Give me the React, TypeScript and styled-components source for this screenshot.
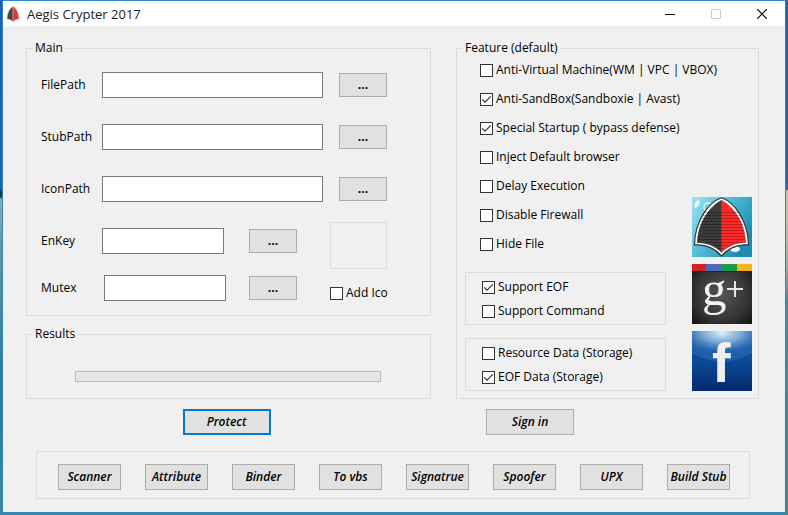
import React from "react";
import styled, { createGlobalStyle } from "styled-components";

const Global = createGlobalStyle`
  * { box-sizing: border-box; }
  body { margin: 0; font-family: "Open Sans", "Trebuchet MS", sans-serif; font-size: 12px; line-height: 16px; color: #000; }
  button, input { font: inherit; color: inherit; margin: 0; }
`;

const Desktop = styled.div`
  min-height: 100vh;
  display: flex;
  padding: 0 2px 2px;
  background:
    linear-gradient(#1c5fb0 0, #2464b4 188px, #0d3a5c 191px, #14405c 197px, #8fa9b4 199px, #6f9490 245px, #2c7a96 380px, #43878f 100%) left / 50% 100% no-repeat,
    linear-gradient(#1c5fb0 0, #2a5ea8 189px, #c4c4b4 191px, #b4b8b0 240px, #8a9a98 280px, #4a90a4 300px, #3c8a98 400px, #43878f 100%) right / 50% 100% no-repeat;
`;

const Window = styled.main`
  flex: 1;
  display: flex;
  flex-direction: column;
  border: 1px solid #2d86c4;
  background: #f0f0f0;
`;

const TitleBar = styled.header`
  display: flex;
  align-items: center;
  height: 25px;
  padding-left: 3px;
  background: #fff;
`;

const Title = styled.h1`
  flex: 1;
  margin: 0 0 0 7px;
  font-size: 13px;
  font-weight: 400;
  line-height: 16px;
  color: #222;
`;

const Caption = styled.button`
  width: 46px;
  height: 25px;
  padding: 0;
  border: 0;
  background: transparent;
  display: grid;
  place-items: center;
  &:disabled { color: #ccc; }
`;

const Body = styled.div`
  flex: 1;
  padding: 15px 26px 12px 23px;
`;

const Columns = styled.div`
  display: grid;
  grid-template-columns: 405fr 303fr;
  column-gap: 25px;
`;

const Column = styled.div`
  display: flex;
  flex-direction: column;
  gap: 11px;
`;

const Group = styled.fieldset<{ $fill?: boolean }>`
  min-width: 0;
  margin: 0;
  padding: 0;
  border: 1px solid #dcdcdc;
  flex: ${(p) => (p.$fill ? "1" : "none")};
`;

const Legend = styled.legend`
  height: 14px;
  line-height: 14px;
  margin-left: 6px;
  padding: 0 2px;
`;

const Fields = styled.div`
  display: grid;
  grid-template-columns: 61px 1fr 64px;
  row-gap: 26px;
  padding: 17px 43px 0 14px;
  align-items: center;
`;

const FieldLabel = styled.label`
  align-self: center;
`;

const TextBox = styled.input`
  width: 100%;
  height: 26px;
  padding: 2px 4px;
  border: 1px solid #7a7a7a;
  background: #fff;
`;

const PathRow = styled.div`
  display: contents;
`;

const Lower = styled.div`
  display: flex;
  justify-content: space-between;
  padding: 20px 43px 14px 14px;
`;

const KeyRows = styled.div`
  display: grid;
  row-gap: 21px;
  padding-top: 6px;
  align-content: start;
`;

const KeyRow = styled.div<{ $inset?: boolean }>`
  display: grid;
  grid-template-columns: ${(p) => (p.$inset ? 63 : 61)}px 122px 1fr;
  width: 256px;
  align-items: center;
`;

const IconArea = styled.div`
  display: flex;
  flex-direction: column;
  gap: 16px;
  width: 57px;
`;

const Preview = styled.div`
  height: 47px;
  border: 1px solid #dcdcdc;
`;

const Push = styled.button<{ $w?: number; $primary?: boolean }>`
  width: ${(p) => p.$w ?? 48}px;
  height: 26px;
  padding: 0;
  border: ${(p) => (p.$primary ? "2px solid #0078d7" : "1px solid #adadad")};
  background: #e1e1e1;
  font-weight: 600;
  font-style: italic;
  white-space: nowrap;
`;

const Browse = styled(Push)`
  height: 24px;
  justify-self: end;
  font-weight: 700;
  font-style: normal;
`;

const Meter = styled.progress`
  appearance: none;
  display: block;
  width: calc(100% - 97px);
  height: 11px;
  margin: 30px 49px 16px 48px;
  border: 1px solid #bcbcbc;
  background: #e6e6e6;
  &::-webkit-progress-bar { background: #e6e6e6; }
  &::-webkit-progress-value { background: #06b025; }
`;

const CheckLabel = styled.label`
  display: flex;
  align-items: center;
  gap: 3px;
  height: 16px;
  white-space: nowrap;
`;

const Box = styled.input`
  appearance: none;
  flex: none;
  width: 13px;
  height: 13px;
  border: 1px solid #333;
  background: #fff;
  &:checked {
    background: #fff url("data:image/svg+xml,%3Csvg xmlns='http://www.w3.org/2000/svg' viewBox='0 0 11 11'%3E%3Cpath d='M1.2 5.3l2.8 2.9 5.8-5.8' fill='none' stroke='%23333' stroke-width='1.2'/%3E%3C/svg%3E") center / 11px 11px no-repeat;
  }
`;

const FeatureBody = styled.div`
  display: flex;
  justify-content: space-between;
  padding: 7px 6px 6px 8px;
`;

const FeatureLeft = styled.div`
  flex: 1;
  min-width: 0;
  max-width: 201px;
`;

const CheckList = styled.div`
  display: grid;
  row-gap: 13px;
  padding: 0 0 20px 15px;
`;

const Storage = styled.div`
  display: grid;
  row-gap: 8px;
  padding: 6px 0 5px 16px;
  border: 1px solid #dcdcdc;
  & + & { margin-top: 13px; }
`;

const Links = styled.nav`
  display: flex;
  flex-direction: column;
  justify-content: flex-end;
  gap: 7px;
`;

const Tile = styled.a`
  display: block;
  height: 60px;
  svg { display: block; overflow: visible; }
`;

const Actions = styled.div`
  display: grid;
  grid-template-columns: 405fr 303fr;
  column-gap: 25px;
  margin-top: 10px;
`;

const Action = styled.div<{ $left?: boolean }>`
  display: flex;
  justify-content: ${(p) => (p.$left ? "flex-start" : "center")};
  padding: ${(p) => (p.$left ? "0 0 0 30px" : "0 4px 0 0")};
`;

const Tools = styled.section`
  display: flex;
  justify-content: space-between;
  margin: 16px 9px 0 10px;
  padding: 12px 19px 8px 21px;
  border: 1px solid #dcdcdc;
`;

function AegisLogo() {
  return (
    <svg width="60" height="60" viewBox="0 0 60 60">
      <defs>
        <linearGradient id="sea" x1="0" y1="0" x2="1" y2="0.6">
          <stop offset="0" stopColor="#a4e2f0" />
          <stop offset="0.4" stopColor="#5ac4de" />
          <stop offset="1" stopColor="#1a8db0" />
        </linearGradient>
        <pattern id="ribs" width="4" height="3" patternUnits="userSpaceOnUse">
          <path d="M0 .5h4" stroke="#000" strokeOpacity="0.28" />
        </pattern>
      </defs>
      <rect width="60" height="60" fill="url(#sea)" />
      <ellipse cx="5" cy="7" rx="2" ry="4" fill="#e4f8fc" transform="rotate(25 5 7)" />
      <circle cx="16" cy="10" r="4" fill="none" stroke="#dff5fa" strokeWidth="1.5" />
      <ellipse cx="43" cy="52" rx="5" ry="3" fill="#f4fcff" />
      <path d="M29.5 .7C17 5 3 23 2.500 48c11-1 20 3 27 11 7-8 16-12 27-11C56 23 42 5 29.500 .7z" fill="#fff" stroke="#333" strokeWidth="1.2" />
      <path d="M29.5 3.500C18 9 6 26 5.500 45.500c9 0 17 3 24 9.500z" fill="#3c3c3c" stroke="#333" strokeWidth="0.8" />
      <path d="M29.5 3.500C41 9 53 26 53.500 45.500c-9 0-17 3-24 9.500z" fill="#ff2a2a" stroke="#b33" strokeWidth="0.8" />
      <path d="M13 14H46c4 8 7 18 7 31-9 0-17 3-23.500 9C23 48 15 45 6 45c0-13 3-23 7-31z" fill="url(#ribs)" />
    </svg>
  );
}

function GooglePlusLogo() {
  return (
    <svg width="60" height="60" viewBox="0 0 60 60">
      <defs>
        <radialGradient id="coal" cx="0.5" cy="0.5" r="0.7">
          <stop offset="0" stopColor="#555" />
          <stop offset="0.6" stopColor="#383635" />
          <stop offset="1" stopColor="#151312" />
        </radialGradient>
      </defs>
      <rect width="60" height="60" fill="url(#coal)" />
      <path d="M0 0h14v7H0z" fill="#d92028" />
      <path d="M14 0h16v7H14z" fill="#4a6cb8" />
      <path d="M30 0h15v7H30z" fill="#169c48" />
      <path d="M45 0h15v7H45z" fill="#f4b51c" />
      <path d="M0 7.500h60" stroke="#222" />
      <text x="10" y="41" fontFamily="Liberation Serif, serif" fontSize="49" fill="#f2f2f2">g</text>
      <path d="M35 25h16M43 17v16" stroke="#e6e6e6" strokeWidth="2" />
    </svg>
  );
}

function FacebookLogo() {
  return (
    <svg width="60" height="60" viewBox="0 0 60 60">
      <defs>
        <linearGradient id="navy" x1="0" y1="0" x2="0" y2="1">
          <stop offset="0" stopColor="#1c5cac" />
          <stop offset="0.5" stopColor="#0c4a98" />
          <stop offset="1" stopColor="#062a6c" />
        </linearGradient>
        <radialGradient id="shine" cx="0.5" cy="0.05" r="0.65">
          <stop offset="0" stopColor="#e4f1f8" />
          <stop offset="0.5" stopColor="#8db8dc" stopOpacity="0.85" />
          <stop offset="1" stopColor="#3478bc" stopOpacity="0.4" />
        </radialGradient>
      </defs>
      <rect width="60" height="60" fill="url(#navy)" />
      <path d="M0 0h60v22Q30 39 0 22z" fill="url(#shine)" />
      <text x="20" y="51" fontFamily="Liberation Sans, sans-serif" fontWeight="700" fontSize="56" fill="#efefef">f</text>
    </svg>
  );
}

function Check({ label, on }: { label: string; on?: boolean }) {
  return (
    <CheckLabel>
      <Box type="checkbox" defaultChecked={on} />
      {label}
    </CheckLabel>
  );
}

const features: [string, boolean][] = [
  ["Anti-Virtual Machine(WM | VPC | VBOX)", false],
  ["Anti-SandBox(Sandboxie | Avast)", true],
  ["Special Startup ( bypass defense)", true],
  ["Inject Default browser", false],
  ["Delay Execution", false],
  ["Disable Firewall", false],
  ["Hide File", false],
];

const tools = ["Scanner", "Attribute", "Binder", "To vbs", "Signatrue", "Spoofer", "UPX", "Build Stub"];

export default function App() {
  return (
    <Desktop>
      <Global />
      <Window>
        <TitleBar>
          <svg width="14" height="16" viewBox="0 0 14 16">
            <path d="M7 .5C3 3 1.500 7 1 13c3 0 4 1 6 2.500z" fill="#444" stroke="#bbb" strokeWidth="0.6" />
            <path d="M7 .5c4 2.500 5.500 6.500 6 12.500-3 0-4 1-6 2.500z" fill="#ee3030" stroke="#caa" strokeWidth="0.6" />
          </svg>
          <Title>Aegis Crypter 2017</Title>
          <Caption aria-label="Minimize">
            <svg width="10" height="10"><path d="M0 5.500h10" stroke="#000" /></svg>
          </Caption>
          <Caption aria-label="Maximize" disabled>
            <svg width="10" height="10"><path d="M.5 .5h9v9h-9z" fill="none" stroke="currentColor" /></svg>
          </Caption>
          <Caption aria-label="Close">
            <svg width="10" height="10"><path d="M0 0l10 10M10 0L0 10" stroke="#000" strokeWidth="1.2" /></svg>
          </Caption>
        </TitleBar>
        <Body>
          <Columns>
            <Column>
              <Group $fill>
                <Legend>Main</Legend>
                <Fields>
                  {["FilePath", "StubPath", "IconPath"].map((name) => (
                    <PathRow key={name}>
                      <FieldLabel htmlFor={name}>{name}</FieldLabel>
                      <TextBox id={name} />
                      <Browse aria-label={`Browse ${name}`}>...</Browse>
                    </PathRow>
                  ))}
                </Fields>
                <Lower>
                  <KeyRows>
                    {["EnKey", "Mutex"].map((name) => (
                      <KeyRow key={name} $inset={name === "Mutex"}>
                        <FieldLabel htmlFor={name}>{name}</FieldLabel>
                        <TextBox id={name} />
                        <Browse aria-label={`Generate ${name}`}>...</Browse>
                      </KeyRow>
                    ))}
                  </KeyRows>
                  <IconArea>
                    <Preview />
                    <Check label="Add Ico" />
                  </IconArea>
                </Lower>
              </Group>
              <Group>
                <Legend>Results</Legend>
                <Meter value={0} max={100} aria-label="Progress" />
              </Group>
            </Column>
            <Group>
              <Legend>Feature (default)</Legend>
              <FeatureBody>
                <FeatureLeft>
                  <CheckList>
                    {features.map(([label, on]) => <Check key={label} label={label} on={on} />)}
                  </CheckList>
                  <Storage>
                    <Check label="Support EOF" on />
                    <Check label="Support Command" />
                  </Storage>
                  <Storage>
                    <Check label="Resource Data (Storage)" />
                    <Check label="EOF Data (Storage)" on />
                  </Storage>
                </FeatureLeft>
                <Links>
                  <Tile href="#home" aria-label="Aegis"><AegisLogo /></Tile>
                  <Tile href="#google-plus" aria-label="Google Plus"><GooglePlusLogo /></Tile>
                  <Tile href="#facebook" aria-label="Facebook"><FacebookLogo /></Tile>
                </Links>
              </FeatureBody>
            </Group>
          </Columns>
          <Actions>
            <Action>
              <Push $w={88} $primary>Protect</Push>
            </Action>
            <Action $left>
              <Push $w={88}>Sign in</Push>
            </Action>
          </Actions>
          <Tools>
            {tools.map((t) => <Push key={t} $w={63}>{t}</Push>)}
          </Tools>
        </Body>
      </Window>
    </Desktop>
  );
}
